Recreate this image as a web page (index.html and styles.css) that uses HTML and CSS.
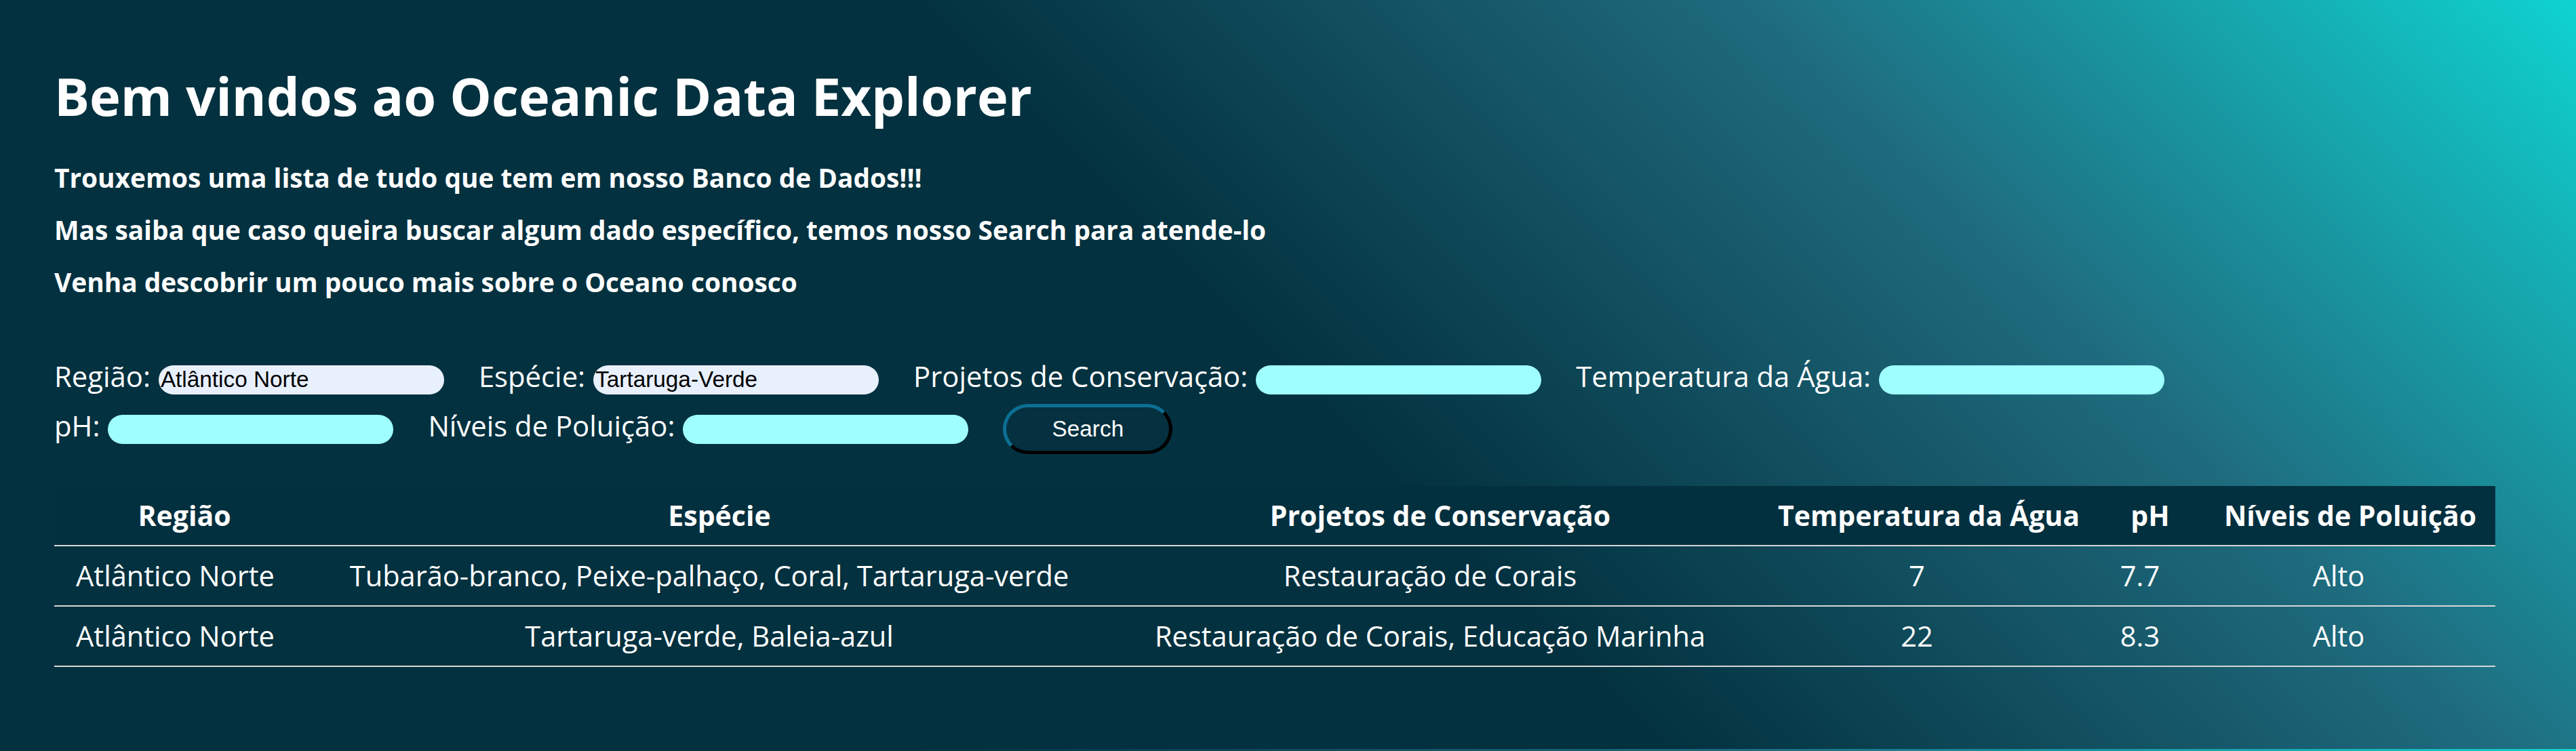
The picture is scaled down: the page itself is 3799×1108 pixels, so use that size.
FILE: index.html
```html
<!DOCTYPE html>
<html lang="pt-BR">
<head>
<meta charset="utf-8">
<title>Oceanic Data Explorer</title>
<link rel="stylesheet" href="styles.css">
</head>
<body>
<main class="page">
  <h1 class="title">Bem vindos ao Oceanic Data Explorer</h1>
  <div class="intro">
    <p class="intro-line">Trouxemos uma lista de tudo que tem em nosso Banco de Dados!!!</p>
    <p class="intro-line">Mas saiba que caso queira buscar algum dado específico, temos nosso Search para atende-lo</p>
    <p class="intro-line">Venha descobrir um pouco mais sobre o Oceano conosco</p>
  </div>
  <form class="filters">
    <label class="field"><span class="field-label">Região:</span><input class="field-input is-filled" type="text" value="Atlântico Norte"></label>
    <label class="field"><span class="field-label">Espécie:</span><input class="field-input is-filled" type="text" value="Tartaruga-Verde"></label>
    <label class="field"><span class="field-label">Projetos de Conservação:</span><input class="field-input" type="text"></label>
    <label class="field"><span class="field-label">Temperatura da Água:</span><input class="field-input" type="text"></label>
    <label class="field"><span class="field-label">pH:</span><input class="field-input" type="text"></label>
    <label class="field"><span class="field-label">Níveis de Poluição:</span><input class="field-input" type="text"></label>
    <button class="search-btn" type="button">Search</button>
  </form>
  <table class="data">
    <colgroup>
      <col class="col-regiao">
      <col class="col-especie">
      <col class="col-projetos">
      <col class="col-temperatura">
      <col class="col-ph">
      <col class="col-poluicao">
    </colgroup>
    <thead>
      <tr>
        <th>Região</th>
        <th>Espécie</th>
        <th>Projetos de Conservação</th>
        <th>Temperatura da Água</th>
        <th>pH</th>
        <th>Níveis de Poluição</th>
      </tr>
    </thead>
    <tbody>
      <tr>
        <td>Atlântico Norte</td>
        <td>Tubarão-branco, Peixe-palhaço, Coral, Tartaruga-verde</td>
        <td>Restauração de Corais</td>
        <td>7</td>
        <td>7.7</td>
        <td>Alto</td>
      </tr>
      <tr>
        <td>Atlântico Norte</td>
        <td>Tartaruga-verde, Baleia-azul</td>
        <td>Restauração de Corais, Educação Marinha</td>
        <td>22</td>
        <td>8.3</td>
        <td>Alto</td>
      </tr>
    </tbody>
  </table>
</main>
</body>
</html>
```

FILE: styles.css
```css
html {
  background: linear-gradient(45deg, #03313f 0%, #03313f 50%, #1f6b7e 75%, #0fd3d0 100%) 0 0 / 100% 1105px repeat-y;
}

body {
  margin: 0;
  font-family: "Open Sans", "Noto Sans", sans-serif;
  color: #ffffff;
}

.page {
  width: 3600px;
  margin-left: 80px;
  padding-top: 91px;
  padding-bottom: 40px;
}

.title {
  margin: 0;
  font-size: 77.5px;
  line-height: 100px;
  font-weight: 700;
}

.intro {
  display: flex;
  flex-direction: column;
  gap: 23px;
  margin-top: 44px;
}

.intro-line {
  margin: 0;
  font-size: 38.8px;
  line-height: 54px;
  font-weight: 700;
}

.filters {
  display: flex;
  flex-wrap: wrap;
  align-items: baseline;
  column-gap: 51px;
  row-gap: 14px;
  margin-top: 85px;
}

.field {
  display: flex;
  align-items: baseline;
  gap: 12px;
}

.field-label {
  font-size: 41.8px;
  line-height: 54px;
}

.field-input {
  box-sizing: border-box;
  width: 421px;
  height: 43px;
  padding: 0 3px;
  border: 0;
  border-radius: 22px;
  background: #9ffefe;
  color: #000000;
  font-family: "Liberation Sans", Arial, sans-serif;
  font-size: 33.33px;
  outline: none;
}

.field-input.is-filled {
  background: #e8f0fe;
}

.search-btn {
  box-sizing: border-box;
  width: 250px;
  height: 74px;
  border: 5px solid;
  border-color: #0b6f94 #000000 #000000 #0b6f94;
  border-radius: 37px;
  background: #04303f;
  color: #ffffff;
  font-family: "Liberation Sans", Arial, sans-serif;
  font-size: 33.33px;
}

.data {
  width: 3600px;
  margin-top: 47px;
  table-layout: fixed;
  border-collapse: collapse;
  font-size: 41.6px;
  line-height: 55px;
}

.col-regiao { width: 384px; }
.col-especie { width: 1194px; }
.col-projetos { width: 932px; }
.col-temperatura { width: 504px; }
.col-ph { width: 154px; }
.col-poluicao { width: 432px; }

.data th {
  padding: 16px 32px;
  background: #03303f;
  font-size: 41px;
  font-weight: 700;
  white-space: nowrap;
  border-bottom: 2px solid #d6d6d6;
}

.data td {
  padding: 16px 62px 16px 32px;
  text-align: center;
  white-space: nowrap;
  border-bottom: 2px solid #d6d6d6;
}
```
